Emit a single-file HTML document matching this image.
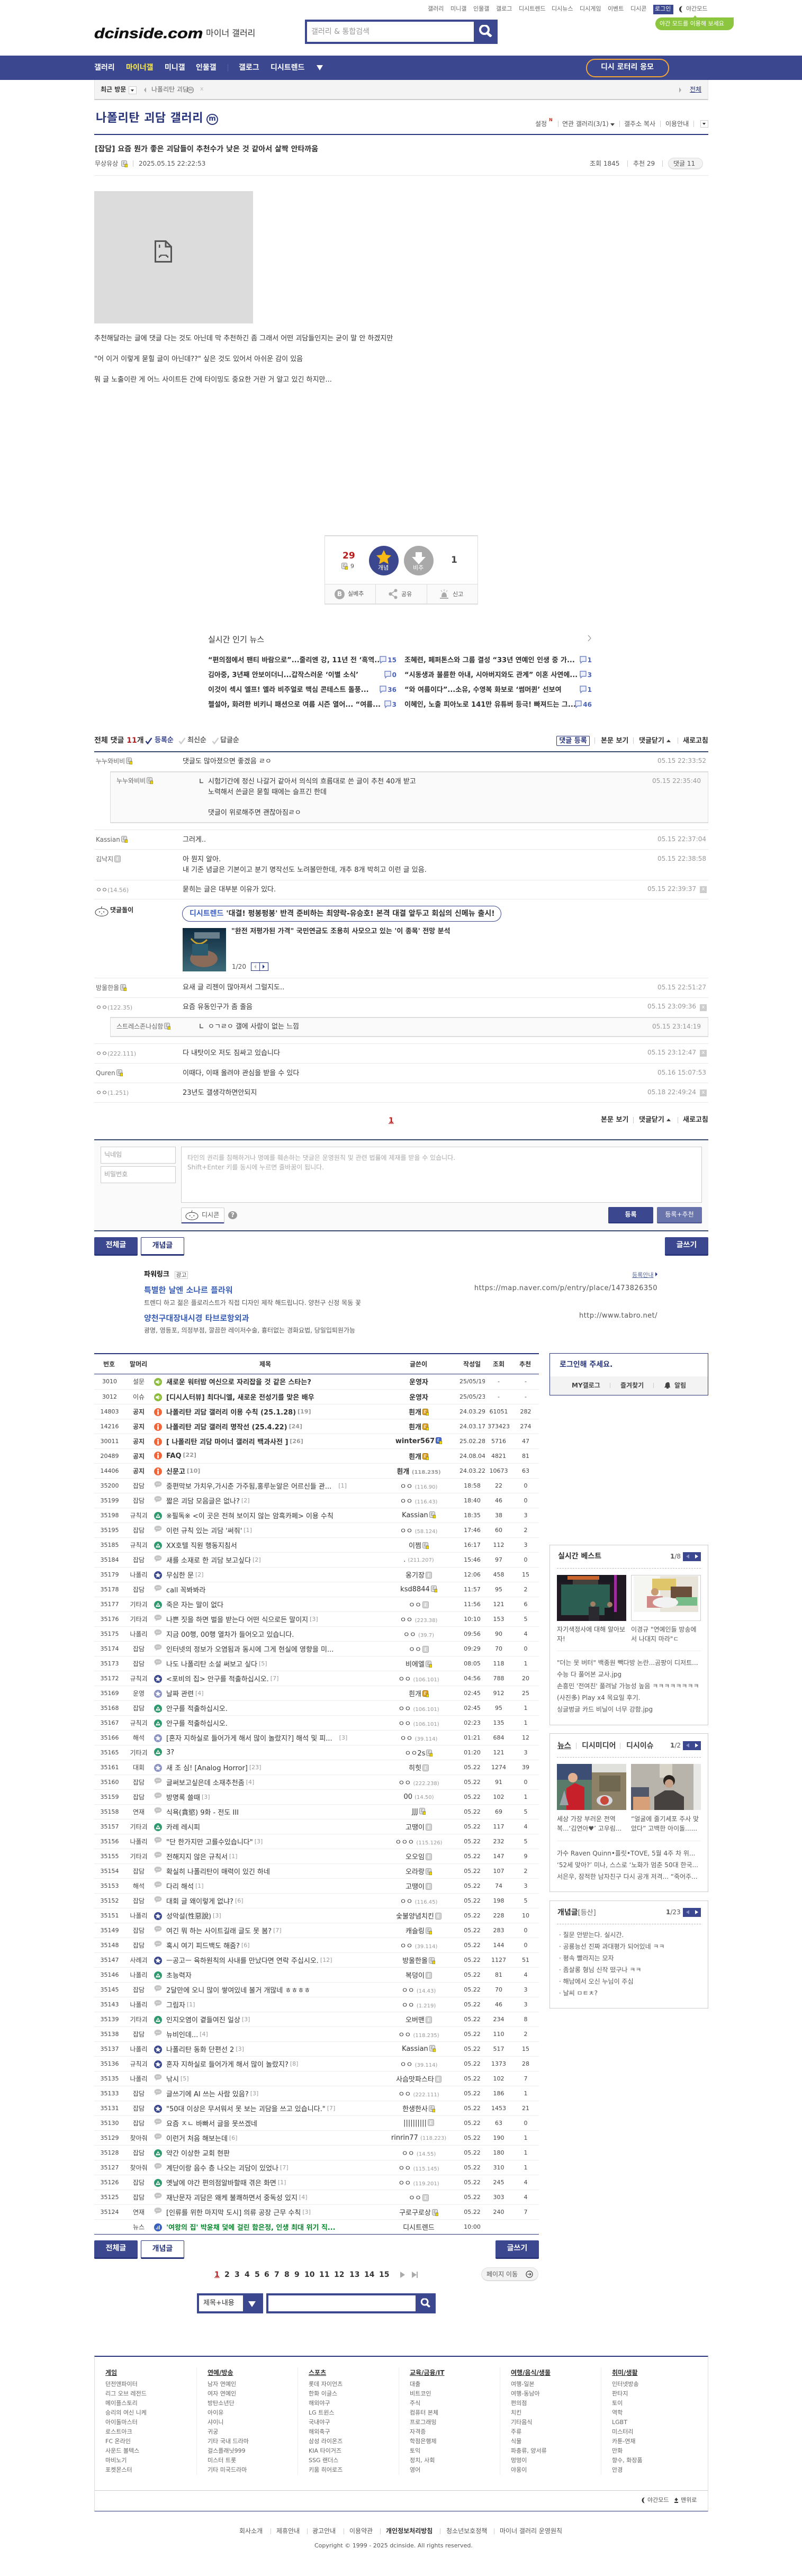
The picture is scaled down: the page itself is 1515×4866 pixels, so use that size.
<!DOCTYPE html>
<html lang="ko"><head><meta charset="utf-8"><title>나폴리탄 괴담 갤러리</title>
<style>
*{box-sizing:border-box}
html,body{margin:0;padding:0;background:#fff}
body{position:relative;width:1515px;height:4866px;overflow:hidden;font-family:"DejaVu Sans","Noto Sans CJK KR",sans-serif;font-size:12px;color:#333}
.a{position:absolute;white-space:nowrap;line-height:20px}
.r{position:absolute}
.b{font-weight:bold}
.f10{font-size:10px}.f11{font-size:11px}.f12{font-size:12px}.f13{font-size:13px}.f14{font-size:14px}.f15{font-size:15px}
.g9{color:#999}.g6{color:#666}.g5{color:#555}
.bl{color:#29367c}
.w{color:#fff}
.l{position:absolute;left:178px;width:1160px;height:1px;background:#e8e8e8}
.sp{position:absolute;width:1px;background:#ccc}
.u{display:inline-block;width:12px;height:13px;vertical-align:-2px;margin-left:2px}
.cc{position:absolute;white-space:nowrap;line-height:20px;font-size:12px;font-weight:bold;color:#4a63b8}
.cc svg{width:15px;height:15px;vertical-align:-3px;margin-right:1px}
table{position:absolute;left:178px;top:2596px;width:840px;border-collapse:collapse;table-layout:fixed;font-size:11px}
td{height:28px;padding:0;border-bottom:1px solid #eee;text-align:center;white-space:nowrap;overflow:hidden;color:#444}
td:nth-child(2){font-size:12px}
td.t{text-align:left;font-size:13px;color:#333;padding-left:3px}
td.t svg{width:15px;height:15px;vertical-align:-3px;margin-right:8px}
td.t svg:has(use[href="#c"]){vertical-align:-1px}
td.t i{font-style:normal;font-size:11px;color:#999;margin-left:3px;position:relative;top:-2px}
td.n{font-size:13px;color:#333}
td.n em{font-style:normal;font-size:10px;color:#999}
.ft{position:absolute;top:4495px;font-size:11px;line-height:18px;color:#666;white-space:nowrap}
.side{position:absolute;left:1038px;width:300px;border:1px solid #ccc;background:#fff}
.dash{position:absolute;left:1052px;width:272px;border-top:1px dashed #bbb}
.arr{position:absolute;left:1290px;width:34px;height:17px;background:#3b4890}
.btn{position:absolute;text-align:center;font-size:14px;font-weight:bold;border-radius:2px}
.nv{background:#3b4890;color:#fff;border-bottom:3px solid #29367c}
</style></head><body>
<svg width="0" height="0" style="position:absolute">
<symbol id="sp" viewBox="0 0 16 16"><circle cx="8" cy="8" r="8" fill="#8dbb3c"/><path d="M3.5 6h2.5l3.5-2.5v9L6 10H3.5z" fill="#fff"/><path d="M11 5.5q1.6 2.5 0 5" stroke="#fff" fill="none"/></symbol>
<symbol id="n" viewBox="0 0 16 16"><circle cx="8" cy="8" r="8" fill="#f0663a"/><rect x="6.5" y="6.5" width="3" height="7" fill="#fff"/><circle cx="8" cy="4" r="1.7" fill="#fff"/></symbol>
<symbol id="c" viewBox="0 0 16 16"><path d="M8 0C3.6 0 .5 2.4.5 5.5c0 2 1.2 3.7 3 4.6L3.5 13l3.3-2.1c.4 0 .8.1 1.2.1 4.4 0 7.5-2.4 7.5-5.5S12.4 0 8 0z" fill="#c4c4c4"/><circle cx="5" cy="5.5" r=".9" fill="#fff"/><circle cx="8" cy="5.5" r=".9" fill="#fff"/><circle cx="11" cy="5.5" r=".9" fill="#fff"/></symbol>
<symbol id="p" viewBox="0 0 16 16"><circle cx="8" cy="8" r="8" fill="#2e9a6e"/><path d="M3 12 8 3.5 13 12z" fill="#fff"/><circle cx="8" cy="8.5" r="1.5" fill="#2e9a6e"/></symbol>
<symbol id="s" viewBox="0 0 16 16"><circle cx="8" cy="8" r="8" fill="#3b4890"/><path d="M8 2.5l1.7 3.6 3.9.5-2.9 2.7.8 3.9L8 10.8l-3.5 1.9.8-3.9-2.9-2.7 3.9-.5z" fill="#fff"/></symbol>
<symbol id="t" viewBox="0 0 16 16"><circle cx="8" cy="8" r="8" fill="#8b93c5"/><path d="M8 2.5l1.7 3.6 3.9.5-2.9 2.7.8 3.9L8 10.8l-3.5 1.9.8-3.9-2.9-2.7 3.9-.5z" fill="#fff"/></symbol>
<symbol id="ns" viewBox="0 0 16 16"><circle cx="8" cy="8" r="8" fill="#3860bb"/><path d="M4 12V9h1.5v3zM7 12V6h1.5v6zM10 12V4h1.5v8z" fill="#fff"/></symbol>
<symbol id="ug" viewBox="0 0 12 13"><rect x=".5" y=".5" width="11" height="12" rx="2" fill="#d5d5d5" stroke="#aaa"/><path d="M7.5 4H5.5L5 8.5h2.2" stroke="#fff" stroke-width="1.3" fill="none"/></symbol>
<symbol id="uy" viewBox="0 0 12 13"><rect x=".5" y=".5" width="10" height="11" rx="2" fill="#e2e2e2" stroke="#999"/><path d="M6.5 3H4.5L4 7.5h2.2" stroke="#999" stroke-width="1.1" fill="none"/><rect x="7" y="7" width="5" height="6" fill="#f2d600" stroke="#555" stroke-width=".7"/></symbol>
<symbol id="uo" viewBox="0 0 12 13"><rect x=".5" y=".5" width="10" height="11" rx="2" fill="#e3a62a" stroke="#a06f10"/><path d="M6.5 3H4.5L4 7.5h2.2" stroke="#fff" stroke-width="1.1" fill="none"/><rect x="7" y="7" width="5" height="6" fill="#f2d600" stroke="#555" stroke-width=".7"/></symbol>
<symbol id="ub" viewBox="0 0 12 13"><rect x=".5" y=".5" width="10" height="11" rx="2" fill="#4a6ed0" stroke="#2a4aa0"/><path d="M6.5 3H4.5L4 7.5h2.2" stroke="#fff" stroke-width="1.1" fill="none"/><rect x="7" y="7" width="5" height="6" fill="#f2d600" stroke="#555" stroke-width=".7"/></symbol>
<symbol id="cm" viewBox="0 0 15 15"><path d="M2 1h11v9.5H6l-3 3v-3H2z" fill="#eef1fb" stroke="#5b72c0" stroke-width="1.2"/></symbol>
<symbol id="dc" viewBox="0 0 26 19"><path d="M13 4C6 4 1 7.500 1 11.500S6 18.500 13 18.500s12-3 12-7-5-7.500-12-7.500zM13 4c-1-1.500-.5-3 1-3.500" fill="#fff" stroke="#333" stroke-width="1"/><circle cx="9" cy="10.500" r="1" fill="#333"/><circle cx="17" cy="10.500" r="1" fill="#333"/><path d="M12 14h2" stroke="#333"/></symbol>
<symbol id="mg" viewBox="0 0 27 23"><circle cx="11" cy="9" r="8" fill="none" stroke="#fff" stroke-width="4"/><path d="M16 15l8 7" stroke="#fff" stroke-width="5"/></symbol>
<symbol id="ck" viewBox="0 0 14 13"><path d="M1.500 7 5 11.500 12.500 1" fill="none" stroke="currentColor" stroke-width="2.400"/></symbol>
<symbol id="rp" viewBox="0 0 7 9"><path d="M1 0V7.500H7" fill="none" stroke="#555" stroke-width="1.600"/></symbol>
</svg>

<!-- top links -->
<div class="a f11 g6" style="left:808px;top:7px">갤러리</div>
<div class="a f11 g6" style="left:851px;top:7px">미니갤</div>
<div class="a f11 g6" style="left:894px;top:7px">인물갤</div>
<div class="a f11 g6" style="left:937px;top:7px">갤로그</div>
<div class="a f11 g6" style="left:980px;top:7px">디시트렌드</div>
<div class="a f11 g6" style="left:1042px;top:7px">디시뉴스</div>
<div class="a f11 g6" style="left:1095px;top:7px">디시게임</div>
<div class="a f11 g6" style="left:1148px;top:7px">이벤트</div>
<div class="a f11 g6" style="left:1191px;top:7px">디시콘</div>
<div class="r" style="left:1234px;top:9px;width:38px;height:18px;background:#3b4890"></div>
<div class="a f11 w" style="left:1237px;top:7px">로그인</div>
<svg class="r" style="left:1282px;top:11px" width="10" height="13"><path d="M7 .500A6 6 0 1 0 7 12.500 8 8 0 0 1 7 .500z" fill="#333"/></svg>
<div class="a f11 g6" style="left:1296px;top:7px">야간모드</div>
<div class="r" style="left:1238px;top:33px;width:148px;height:24px;background:#8cc63f;border-radius:12px 0 12px 12px"></div>
<div class="r" style="left:1309px;top:29px;width:0;height:0;border-left:4px solid transparent;border-right:4px solid transparent;border-bottom:5px solid #8cc63f"></div>
<div class="a f11 w" style="left:1246px;top:35px">야간 모드를 이용해 보세요</div>

<!-- logo / search -->
<div class="a b" style="left:178px;top:48px;font:italic bold 27px/30px 'Liberation Sans',sans-serif;color:#111;transform:scaleX(1.19);transform-origin:left;-webkit-text-stroke:.5px #111">dcinside.com</div>
<div class="a" style="left:389px;top:53px;font-size:16px;color:#333">마이너 갤러리</div>
<div class="r" style="left:576px;top:37px;width:364px;height:46px;background:#3b4890"></div>
<div class="r" style="left:580px;top:41px;width:315px;height:38px;background:#fff"></div>
<div class="a f14 g9" style="left:588px;top:50px">갤러리 &amp; 통합검색</div>
<svg class="r" style="left:904px;top:47px" width="27" height="23"><use href="#mg"/></svg>

<!-- nav -->
<div class="r" style="left:0;top:105px;width:1515px;height:46px;background:#3b4890"></div>
<div class="a f14 b w" style="left:178px;top:118px">갤러리</div>
<div class="a f14 b" style="left:238px;top:118px;color:#ffed44">마이너갤</div>
<div class="a f14 b w" style="left:311px;top:118px">미니갤</div>
<div class="a f14 b w" style="left:370px;top:118px">인물갤</div>
<div class="r" style="left:430px;top:121px;width:1px;height:14px;background:#5a66a8"></div>
<div class="a f14 b w" style="left:451px;top:118px">갤로그</div>
<div class="a f14 b w" style="left:511px;top:118px">디시트렌드</div>
<div class="r" style="left:598px;top:123px;width:0;height:0;border-left:6.500px solid transparent;border-right:6.500px solid transparent;border-top:10px solid #fff"></div>
<div class="r" style="left:1107px;top:111px;width:157px;height:35px;border:2px solid #f5a635;border-radius:17px"></div>
<div class="a f14 b w" style="left:1135px;top:117px">디시 로터리 응모</div>

<!-- breadcrumb -->
<div class="r" style="left:178px;top:151px;width:1160px;height:38px;background:#f4f4f4;border:1px solid #e4e4e4;border-top:0;border-bottom:2px solid #ccc"></div>
<div class="a f12 b" style="left:190px;top:159px">최근 방문</div>
<div class="r" style="left:243px;top:163px;width:15px;height:15px;background:#fff;border:1px solid #ccc"></div>
<div class="r" style="left:247px;top:169px;border-left:3.500px solid transparent;border-right:3.500px solid transparent;border-top:4px solid #333"></div>
<div class="r" style="left:272px;top:165px;border-top:5px solid transparent;border-bottom:5px solid transparent;border-right:4px solid #aaa"></div>
<div class="a f12 g6" style="left:286px;top:159px">나폴리탄 괴담</div>
<div class="r" style="left:354px;top:164px;width:12px;height:12px;border:1px solid #777;border-radius:50%;font-size:8px;line-height:9px;text-align:center;color:#555">m</div>
<div class="a f11" style="left:378px;top:158px;color:#bbb">x</div>
<div class="r" style="left:1283px;top:165px;border-top:5px solid transparent;border-bottom:5px solid transparent;border-left:4px solid #aaa"></div>
<div class="a f12 bl" style="left:1303px;top:159px;text-decoration:underline">전체</div>

<!-- title -->
<div class="a b bl" style="left:181px;top:212px;font-size:22px;line-height:24px;letter-spacing:.5px">나폴리탄 괴담 갤러리</div>
<div class="r" style="left:390px;top:215px;width:22px;height:21px;border:2px solid #29367c;border-radius:50%;color:#29367c;font-size:13px;line-height:16px;text-align:center;font-weight:bold">m</div>
<div class="a f12 g5" style="left:1011px;top:224px">설정</div>
<div class="a b" style="left:1037px;top:222px;font-size:8px;line-height:10px;color:#c0392b">N</div>
<div class="sp" style="left:1054px;top:228px;height:12px"></div>
<div class="a f12 g5" style="left:1062px;top:224px">연관 갤러리(3/1)</div>
<div class="r" style="left:1153px;top:233px;border-left:4px solid transparent;border-right:4px solid transparent;border-top:5px solid #444"></div>
<div class="sp" style="left:1170px;top:228px;height:12px"></div>
<div class="a f12 g5" style="left:1179px;top:224px">갤주소 복사</div>
<div class="sp" style="left:1247px;top:228px;height:12px"></div>
<div class="a f12 g5" style="left:1257px;top:224px">이용안내</div>
<div class="sp" style="left:1310px;top:228px;height:12px"></div>
<div class="r" style="left:1323px;top:227px;width:15px;height:14px;background:#fff;border:1px solid #ccc"></div>
<div class="r" style="left:1327px;top:232px;border-left:3.500px solid transparent;border-right:3.500px solid transparent;border-top:4px solid #333"></div>
<div class="r" style="left:178px;top:253px;width:1160px;height:2px;background:#29367c"></div>

<!-- post head -->
<div class="a f14 b" style="left:179px;top:272px">[잡담] 요즘 뭔가 좋은 괴담들이 추천수가 낮은 것 같아서 살짝 안타까움</div>
<div class="a f12 g5" style="left:179px;top:299px">무상유상</div>
<svg class="r" style="left:229px;top:303px" width="12" height="13"><use href="#uy"/></svg>
<div class="sp" style="left:251px;top:303px;height:12px"></div>
<div class="a f12 g5" style="left:262px;top:299px">2025.05.15 22:22:53</div>
<div class="a f12 g5" style="left:1114px;top:299px">조회 1845</div>
<div class="sp" style="left:1185px;top:303px;height:12px"></div>
<div class="a f12 g5" style="left:1196px;top:299px">추천 29</div>
<div class="sp" style="left:1251px;top:303px;height:12px"></div>
<div class="r" style="left:1262px;top:298px;width:66px;height:22px;background:#f3f3f3;border:1px solid #ddd;border-bottom:2px solid #ddd;border-radius:11px"></div>
<div class="a f12 g5" style="left:1272px;top:299px">댓글 11</div>
<div class="r" style="left:178px;top:331px;width:1160px;height:1px;background:#e8e8e8"></div>

<!-- image placeholder -->
<div class="r" style="left:178px;top:361px;width:300px;height:250px;background:#dcdcdc"></div>
<svg class="r" style="left:292px;top:454px" width="33" height="42"><path d="M1.500 1.500H21L31.500 12V40.500H1.500Z" fill="none" stroke="#555" stroke-width="3"/><path d="M21 1.500V12H31.500" fill="none" stroke="#555" stroke-width="3"/><rect x="8" y="8" width="2.500" height="6" fill="#555"/><path d="M9 33v-3h2.500v-2h11v2h2.500v3" fill="none" stroke="#555" stroke-width="2"/></svg>
<div class="a f13" style="left:178px;top:630px">추천해달라는 글에 댓글 다는 것도 아닌데 막 추천하긴 좀 그래서 어떤 괴담들인지는 굳이 말 안 하겠지만</div>
<div class="a f13" style="left:178px;top:669px">"어 이거 이렇게 묻힐 글이 아닌데??" 싶은 것도 있어서 아쉬운 감이 있음</div>
<div class="a f13" style="left:178px;top:708px">뭐 글 노출이란 게 어느 사이트든 간에 타이밍도 중요한 거란 거 알고 있긴 하지만...</div>

<!-- vote -->
<div class="r" style="left:613px;top:1011px;width:290px;height:131px;background:#fff;border:1px solid #ddd;border-top:2px solid #ddd;border-bottom:2px solid #ddd"></div>
<div class="r" style="left:614px;top:1103px;width:288px;height:37px;background:#fafafa;border-top:1px solid #ddd"></div>
<div class="sp" style="left:709px;top:1103px;height:37px;background:#ddd"></div>
<div class="sp" style="left:806px;top:1103px;height:37px;background:#ddd"></div>
<div class="a b" style="left:647px;top:1040px;font-size:17px;color:#b71c1c">29</div>
<svg class="r" style="left:645px;top:1063px" width="12" height="13"><use href="#uy"/></svg>
<div class="a f11 g5" style="left:662px;top:1060px">9</div>
<div class="r" style="left:697px;top:1031px;width:56px;height:56px;border-radius:50%;background:#3b4890"></div>
<svg class="r" style="left:710px;top:1039px" width="30" height="27"><path d="M15 0l4.300 9 9.700 1.200-7 6.500 1.800 9.800L15 21.800 6.200 26.500 8 16.700 1 10.200 10.700 9z" fill="#f8b914"/></svg>
<div class="a f11 w" style="left:714px;top:1063px">개념</div>
<div class="r" style="left:763px;top:1031px;width:56px;height:56px;border-radius:50%;background:#a9a9a9"></div>
<svg class="r" style="left:777px;top:1043px" width="28" height="23"><path d="M8 0H20V9H27L14 23 1 9H8z" fill="#fff"/></svg>
<div class="a f11 w" style="left:780px;top:1063px">비추</div>
<div class="a b" style="left:852px;top:1048px;font-size:17px;color:#444">1</div>
<div class="r" style="left:632px;top:1113px;width:19px;height:19px;background:#a9a9a9;border-radius:50%;color:#fff;font:bold 12px/19px 'DejaVu Sans',sans-serif;text-align:center">B</div>
<div class="a f11 g5" style="left:657px;top:1112px">실베추</div>
<svg class="r" style="left:734px;top:1112px" width="17" height="20"><circle cx="13.500" cy="3.500" r="3" fill="#aaa"/><circle cx="3.500" cy="10" r="3.200" fill="#aaa"/><circle cx="13.500" cy="16.500" r="3" fill="#aaa"/><path d="M13.500 3.500 3.500 10l10 6.500" stroke="#aaa" stroke-width="1.600" fill="none"/></svg>
<div class="a f11 g5" style="left:758px;top:1113px">공유</div>
<svg class="r" style="left:830px;top:1112px" width="18" height="20"><path d="M4 16q0-9 5-9t5 9z" fill="#aaa"/><rect x="1" y="17" width="16" height="2" fill="#aaa"/><path d="M9 1v4M3 3l2 3M15 3l-2 3" stroke="#aaa"/></svg>
<div class="a f11 g5" style="left:855px;top:1113px">신고</div>

<!-- news -->
<div class="a f15" style="left:393px;top:1198px">실시간 인기 뉴스</div>
<svg class="r" style="left:1110px;top:1199px" width="8" height="13"><path d="M1 1l5 5.500L1 12" stroke="#888" fill="none"/></svg>
<div class="a f13 b" style="left:393px;top:1238px">“편의점에서 팬티 바람으로”...줄리엔 강, 11년 전 ‘흑역...</div>
<div class="a f13 b" style="left:393px;top:1266px">김아중, 3년째 안보이더니...갑작스러운 ‘이별 소식’</div>
<div class="a f13 b" style="left:393px;top:1294px">이것이 섹시 엘프! 엘라 비주얼로 맥심 콘테스트 돌풍...</div>
<div class="a f13 b" style="left:393px;top:1322px">첼설아, 화려한 비키니 패션으로 여름 시즌 열어... “여름...</div>
<div class="a f13 b" style="left:764px;top:1238px">조혜련, 페퍼톤스와 그룹 결성 “33년 연예인 인생 중 가...</div>
<div class="a f13 b" style="left:764px;top:1266px">“시동생과 불륜한 아내, 시아버지와도 관계” 이혼 사연에...</div>
<div class="a f13 b" style="left:764px;top:1294px">“와 여름이다”...소유, 수영복 화보로 ‘썸머퀸’ 선보여</div>
<div class="a f13 b" style="left:764px;top:1322px">이혜인, 노출 피아노로 141만 유튜버 등극! 빠져드는 그...</div>
<div class="cc" style="right:766px;top:1237px"><svg><use href="#cm"/></svg>15</div>
<div class="cc" style="right:766px;top:1265px"><svg><use href="#cm"/></svg>0</div>
<div class="cc" style="right:766px;top:1293px"><svg><use href="#cm"/></svg>36</div>
<div class="cc" style="right:766px;top:1321px"><svg><use href="#cm"/></svg>3</div>
<div class="cc" style="right:397px;top:1237px"><svg><use href="#cm"/></svg>1</div>
<div class="cc" style="right:397px;top:1265px"><svg><use href="#cm"/></svg>3</div>
<div class="cc" style="right:397px;top:1293px"><svg><use href="#cm"/></svg>1</div>
<div class="cc" style="right:397px;top:1321px"><svg><use href="#cm"/></svg>46</div>

<!-- comment head -->
<div class="a f14 b" style="left:178px;top:1389px">전체 댓글 <span style="color:#b71c1c">11</span>개</div>
<svg class="r" style="left:274px;top:1393px;color:#29367c" width="14" height="13"><use href="#ck"/></svg>
<div class="a f13 b" style="left:292px;top:1389px;color:#3b4890">등록순</div>
<svg class="r" style="left:337px;top:1393px;color:#ccc" width="14" height="13"><use href="#ck"/></svg>
<div class="a f13 b" style="left:354px;top:1389px;color:#666">최신순</div>
<svg class="r" style="left:400px;top:1393px;color:#ccc" width="14" height="13"><use href="#ck"/></svg>
<div class="a f13 b" style="left:416px;top:1389px;color:#666">답글순</div>
<div class="r f13 b bl" style="left:1051px;top:1390px;width:63px;height:19px;border:1px solid #29367c;border-radius:2px;text-align:center;line-height:17px">댓글 등록</div>
<div class="a f13 b" style="left:1135px;top:1390px">본문 보기</div>
<div class="sp" style="left:1123px;top:1393px;height:12px"></div>
<div class="sp" style="left:1196px;top:1393px;height:12px"></div>
<div class="a f13 b" style="left:1207px;top:1390px">댓글닫기</div>
<div class="r" style="left:1259px;top:1397px;border-left:4px solid transparent;border-right:4px solid transparent;border-bottom:5px solid #444"></div>
<div class="sp" style="left:1280px;top:1393px;height:12px"></div>
<div class="a f13 b" style="left:1290px;top:1390px">새로고침</div>
<div class="r" style="left:178px;top:1419px;width:1160px;height:2px;background:#3a4a6c"></div>

<!-- comments -->
<div class="a f12 g6" style="left:181px;top:1428px">누누와비비<svg class="u"><use href="#uy"/></svg></div>
<div class="a f13" style="left:345px;top:1429px">댓글도 많아졌으면 좋겠음 ㄹㅇ</div>
<div class="a f12 g9" style="right:181px;top:1427px">05.15 22:33:52</div>

<div class="r" style="left:208px;top:1457px;width:1130px;height:98px;background:#fafafa;border:1px solid #ddd;border-width:2px 1px 2px 1px"></div>
<div class="a f12 g6" style="left:220px;top:1465px">누누와비비<svg class="u"><use href="#uy"/></svg></div>
<svg class="r" style="left:377px;top:1471px" width="7" height="9"><use href="#rp"/></svg>
<div class="a f13" style="left:393px;top:1467px">시험기간에 정신 나갈거 같아서 의식의 흐름대로 쓴 글이 추천 40개 받고</div>
<div class="a f13" style="left:393px;top:1487px">노력해서 쓴글은 묻힐 때에는 슬프긴 한데</div>
<div class="a f13" style="left:393px;top:1526px">댓글이 위로해주면 괜찮아짐ㄹㅇ</div>
<div class="a f12 g9" style="right:191px;top:1465px">05.15 22:35:40</div>
<div class="l" style="top:1567px"></div>

<div class="a f12 g6" style="left:181px;top:1576px">Kassian<svg class="u"><use href="#uy"/></svg></div>
<div class="a f13" style="left:345px;top:1577px">그러게..</div>
<div class="a f12 g9" style="right:181px;top:1575px">05.15 22:37:04</div>
<div class="l" style="top:1604px"></div>

<div class="a f12 g6" style="left:181px;top:1613px">김낙지<svg class="u"><use href="#ug"/></svg></div>
<div class="a f13" style="left:345px;top:1614px">아 뭔지 알아.</div>
<div class="a f13" style="left:345px;top:1634px">내 기준 념글은 기본이고 분기 명작선도 노려볼만한데, 개추 8개 박히고 이런 글 있음.</div>
<div class="a f12 g9" style="right:181px;top:1612px">05.15 22:38:58</div>
<div class="l" style="top:1662px"></div>

<div class="a f12 g6" style="left:181px;top:1671px">ㅇㅇ<span class="f11 g9">(14.56)</span></div>
<div class="a f13" style="left:345px;top:1671px">묻히는 글은 대부분 이유가 있다.</div>
<div class="a f12 g9" style="right:200px;top:1669px">05.15 22:39:37</div>
<div class="r" style="left:1322px;top:1674px;width:13px;height:13px;background:#ccc;color:#fff;font-size:10px;line-height:12px;text-align:center">x</div>
<div class="l" style="top:1698px"></div>

<svg class="r" style="left:179px;top:1712px" width="26" height="19"><use href="#dc"/></svg>
<div class="a f12 b" style="left:208px;top:1709px">댓글돌이</div>
<div class="r" style="left:344px;top:1711px;width:603px;height:30px;border:1px solid #3b4890;border-radius:15px"></div>
<div class="a f14 b" style="left:358px;top:1716px"><span style="color:#3b5fc0">디시트렌드</span> '대결! 펑봉펑봉' 반격 준비하는 최양락-유승호! 본격 대결 앞두고 회심의 신메뉴 출시!</div>
<svg class="r" style="left:345px;top:1753px" width="82" height="82"><defs><linearGradient id="np" x1="0" y1="0" x2="0" y2="1"><stop offset="0" stop-color="#0e2a3e"/><stop offset="1" stop-color="#3d6a78"/></linearGradient></defs><rect width="82" height="82" fill="url(#np)"/><ellipse cx="40" cy="58" rx="26" ry="16" fill="#8a6a58"/><path d="M16 20q14 18 30 2" stroke="#c8a030" stroke-width="3" fill="none"/><rect x="22" y="8" width="48" height="12" fill="#6a7f8c"/><rect x="18" y="30" width="30" height="22" fill="#2b5a6e"/></svg>
<div class="a f13 b" style="left:437px;top:1750px">"완전 저평가된 가격" 국민연금도 조용히 사모으고 있는 '이 종목' 전망 분석</div>
<div class="a f12 g5" style="left:438px;top:1816px">1/20</div>
<div class="r" style="left:474px;top:1818px;width:33px;height:16px;border:1px solid #29367c"></div>
<div class="r" style="left:490px;top:1818px;width:1px;height:16px;background:#29367c"></div>
<div class="r" style="left:480px;top:1822px;border-top:4px solid transparent;border-bottom:4px solid transparent;border-right:4px solid #bbb"></div>
<div class="r" style="left:496px;top:1822px;border-top:4px solid transparent;border-bottom:4px solid transparent;border-left:4px solid #29367c"></div>
<div class="l" style="top:1847px"></div>

<div class="a f12 g6" style="left:181px;top:1856px">방울한올<svg class="u"><use href="#uy"/></svg></div>
<div class="a f13" style="left:345px;top:1856px">요새 글 리젠이 많아져서 그럴지도..</div>
<div class="a f12 g9" style="right:181px;top:1855px">05.15 22:51:27</div>
<div class="l" style="top:1884px"></div>

<div class="a f12 g6" style="left:181px;top:1893px">ㅇㅇ<span class="f11 g9">(122.35)</span></div>
<div class="a f13" style="left:345px;top:1893px">요즘 유동인구가 좀 줄음</div>
<div class="a f12 g9" style="right:200px;top:1891px">05.15 23:09:36</div>
<div class="r" style="left:1322px;top:1897px;width:13px;height:13px;background:#ccc;color:#fff;font-size:10px;line-height:12px;text-align:center">x</div>
<div class="r" style="left:208px;top:1921px;width:1130px;height:38px;background:#fafafa;border:1px solid #ddd;border-width:2px 1px 2px 1px"></div>
<div class="a f12 g6" style="left:220px;top:1929px">스트레스존나심함<svg class="u"><use href="#uy"/></svg></div>
<svg class="r" style="left:377px;top:1934px" width="7" height="9"><use href="#rp"/></svg>
<div class="a f13" style="left:393px;top:1930px">ㅇㄱㄹㅇ 갤에 사람이 없는 느낌</div>
<div class="a f12 g9" style="right:191px;top:1929px">05.15 23:14:19</div>
<div class="l" style="top:1971px"></div>

<div class="a f12 g6" style="left:181px;top:1980px">ㅇㅇ<span class="f11 g9">(222.111)</span></div>
<div class="a f13" style="left:345px;top:1980px">다 내탓이오 저도 짐싸고 있습니다</div>
<div class="a f12 g9" style="right:200px;top:1978px">05.15 23:12:47</div>
<div class="r" style="left:1322px;top:1983px;width:13px;height:13px;background:#ccc;color:#fff;font-size:10px;line-height:12px;text-align:center">x</div>
<div class="l" style="top:2008px"></div>

<div class="a f12 g6" style="left:181px;top:2017px">Quren<svg class="u"><use href="#uy"/></svg></div>
<div class="a f13" style="left:345px;top:2018px">이때다, 이때 올려야 관심을 받을 수 있다</div>
<div class="a f12 g9" style="right:181px;top:2016px">05.16 15:07:53</div>
<div class="l" style="top:2045px"></div>

<div class="a f12 g6" style="left:181px;top:2054px">ㅇㅇ<span class="f11 g9">(1.251)</span></div>
<div class="a f13" style="left:345px;top:2055px">23년도 갤생각하면안되지</div>
<div class="a f12 g9" style="right:200px;top:2053px">05.18 22:49:24</div>
<div class="r" style="left:1322px;top:2058px;width:13px;height:13px;background:#ccc;color:#fff;font-size:10px;line-height:12px;text-align:center">x</div>
<div class="l" style="top:2082px"></div>

<div class="a f14 b" style="left:734px;top:2107px;color:#b71c1c;text-decoration:underline">1</div>
<div class="a f13 b" style="left:1135px;top:2106px">본문 보기</div>
<div class="sp" style="left:1196px;top:2110px;height:12px"></div>
<div class="a f13 b" style="left:1207px;top:2106px">댓글닫기</div>
<div class="r" style="left:1259px;top:2113px;border-left:4px solid transparent;border-right:4px solid transparent;border-bottom:5px solid #444"></div>
<div class="sp" style="left:1280px;top:2110px;height:12px"></div>
<div class="a f13 b" style="left:1290px;top:2106px">새로고침</div>

<!-- write -->
<div class="r" style="left:178px;top:2152px;width:1160px;height:174px;background:#fafafa;border-top:2px solid #3a4a6c;border-bottom:2px solid #3a4a6c"></div>
<div class="r" style="left:190px;top:2166px;width:142px;height:32px;background:#fff;border:1px solid #ccc"></div>
<div class="a f12 g9" style="left:197px;top:2171px">닉네임</div>
<div class="r" style="left:190px;top:2203px;width:142px;height:32px;background:#fff;border:1px solid #ccc"></div>
<div class="a f12 g9" style="left:197px;top:2208px">비밀번호</div>
<div class="r" style="left:342px;top:2166px;width:984px;height:106px;background:#fff;border:1px solid #ccc"></div>
<div class="a f12" style="left:354px;top:2177px;color:#aaa">타인의 권리를 침해하거나 명예를 훼손하는 댓글은 운영원칙 및 관련 법률에 제재를 받을 수 있습니다.</div>
<div class="a f12" style="left:354px;top:2195px;color:#aaa">Shift+Enter 키를 동시에 누르면 줄바꿈이 됩니다.</div>
<div class="r" style="left:342px;top:2281px;width:82px;height:30px;background:#fff;border:1px solid #ccc;border-bottom:2px solid #29367c;border-radius:2px"></div>
<svg class="r" style="left:350px;top:2286px" width="25" height="19"><use href="#dc"/></svg>
<div class="a f12 g5" style="left:381px;top:2285px">디시콘</div>
<div class="r" style="left:431px;top:2288px;width:17px;height:15px;border-radius:50%;background:#999;color:#fff;font-size:12px;font-weight:bold;line-height:15px;text-align:center">?</div>
<div class="r w f12 b" style="left:1149px;top:2280px;width:85px;height:31px;background:#3b4890;border-bottom:2px solid #29367c;border-radius:2px;text-align:center;line-height:28px">등록</div>
<div class="r w f12" style="left:1241px;top:2280px;width:85px;height:31px;background:#6a74ac;border-bottom:2px solid #4a5590;border-radius:2px;text-align:center;line-height:28px">등록+추천</div>

<div class="btn nv" style="left:178px;top:2337px;width:82px;height:35px;line-height:30px">전체글</div>
<div class="btn" style="left:266px;top:2337px;width:82px;height:35px;line-height:30px;background:#fff;color:#29367c;border:1px solid #29367c;border-bottom:3px solid #29367c">개념글</div>
<div class="btn nv" style="left:1256px;top:2337px;width:82px;height:35px;line-height:30px">글쓰기</div>

<!-- power link -->
<div class="a f13 b" style="left:272px;top:2398px;color:#111">파워링크</div>
<div class="r" style="left:330px;top:2401px;width:25px;height:15px;border:1px solid #ccc;font-size:11px;line-height:13px;text-align:center;color:#555">광고</div>
<div class="a f11" style="left:1194px;top:2399px;color:#5a6a9a;text-decoration:underline">등록안내</div>
<div class="r" style="left:1238px;top:2403px;border-top:4px solid transparent;border-bottom:4px solid transparent;border-left:4px solid #29367c"></div>
<div class="a f15 b" style="left:272px;top:2427px;color:#3b60b8">특별한 날엔 소나르 플라워</div>
<div class="a f13 g5" style="right:273px;top:2424px;letter-spacing:.45px">https://map.naver.com/p/entry/place/1473826350</div>
<div class="a f12 g5" style="left:272px;top:2451px">트렌디 하고 젊은 플로리스트가 직접 디자인 제작 해드립니다. 양천구 신정 목동 꽃</div>
<div class="a f15 b" style="left:272px;top:2480px;color:#3b60b8">양천구대장내시경 타브로항외과</div>
<div class="a f13 g5" style="right:273px;top:2476px;letter-spacing:.45px">http://www.tabro.net/</div>
<div class="a f12 g5" style="left:272px;top:2503px">광명, 영등포, 의정부점, 깔끔한 레이저수술, 흉터없는 경화요법, 당일입퇴원가능</div>

<!-- list head -->
<div class="r" style="left:178px;top:2556px;width:840px;height:2px;background:#29367c"></div>
<div class="r" style="left:178px;top:2595px;width:840px;height:1px;background:#29367c"></div>
<div class="a f12 b" style="left:195px;top:2567px">번호</div>
<div class="a f12 b" style="left:245px;top:2567px">말머리</div>
<div class="a f12 b" style="left:490px;top:2567px">제목</div>
<div class="a f12 b" style="left:774px;top:2567px">글쓴이</div>
<div class="a f12 b" style="left:875px;top:2567px">작성일</div>
<div class="a f12 b" style="left:931px;top:2567px">조회</div>
<div class="a f12 b" style="left:981px;top:2567px">추천</div>

<table><colgroup><col style="width:58px"><col style="width:52px"><col style="width:426px"><col style="width:154px"><col style="width:48px"><col style="width:52px"><col style="width:50px"></colgroup>
<tr><td>3010<td>설문<td class="t b"><svg><use href="#sp"/></svg>새로운 워터밤 여신으로 자리잡을 것 같은 스타는?<td class="n b">운영자<td>25/05/19<td>-<td>-
<tr><td>3012<td>이슈<td class="t b"><svg><use href="#sp"/></svg>[디시人터뷰] 최다니엘, 새로운 전성기를 맞은 배우<td class="n b">운영자<td>25/05/23<td>-<td>-
<tr><td>14803<td class="b">공지<td class="t b"><svg><use href="#n"/></svg>나폴리탄 괴담 갤러리 이용 수칙 (25.1.28)<i>[19]</i><td class="n b">흰개<svg class="u"><use href="#uo"/></svg><td>24.03.29<td>61051<td>282
<tr><td>14216<td class="b">공지<td class="t b"><svg><use href="#n"/></svg>나폴리탄 괴담 갤러리 명작선 (25.4.22)<i>[24]</i><td class="n b">흰개<svg class="u"><use href="#uo"/></svg><td>24.03.17<td>373423<td>274
<tr><td>30011<td class="b">공지<td class="t b"><svg><use href="#n"/></svg>[ 나폴리탄 괴담 마이너 갤러리 백과사전 ]<i>[26]</i><td class="n b">winter567<svg class="u"><use href="#ub"/></svg><td>25.02.28<td>5716<td>47
<tr><td>20489<td class="b">공지<td class="t b"><svg><use href="#n"/></svg>FAQ<i>[22]</i><td class="n b">흰개<svg class="u"><use href="#uo"/></svg><td>24.08.04<td>4821<td>81
<tr><td>14406<td class="b">공지<td class="t b"><svg><use href="#n"/></svg>신문고<i>[10]</i><td class="n b">흰개 <em class="b">(118.235)</em><td>24.03.22<td>10673<td>63
<tr><td>35200<td>잡담<td class="t"><svg><use href="#c"/></svg>중편막보 가치우,가시춘 가주됨,홍루눈알은 어르신들 관...<i style="margin-left:13px">[1]</i><td class="n">ㅇㅇ <em>(116.90)</em><td>18:58<td>22<td>0
<tr><td>35199<td>잡담<td class="t"><svg><use href="#c"/></svg>짧은 괴담 모음글은 없나?<i>[2]</i><td class="n">ㅇㅇ <em>(116.43)</em><td>18:40<td>46<td>0
<tr><td>35198<td>규칙괴<td class="t"><svg><use href="#p"/></svg>※필독※ &lt;이 곳은 전혀 보이지 않는 암흑카페&gt; 이용 수칙<td class="n">Kassian<svg class="u"><use href="#uy"/></svg><td>18:35<td>38<td>3
<tr><td>35195<td>잡담<td class="t"><svg><use href="#c"/></svg>이런 규칙 있는 괴담 '써줘'<i>[1]</i><td class="n">ㅇㅇ <em>(58.124)</em><td>17:46<td>60<td>2
<tr><td>35185<td>규칙괴<td class="t"><svg><use href="#p"/></svg>XX호텔 직원 행동지침서<td class="n">이쩜<svg class="u"><use href="#uy"/></svg><td>16:17<td>112<td>3
<tr><td>35184<td>잡담<td class="t"><svg><use href="#c"/></svg>새를 소재로 한 괴담 보고싶다<i>[2]</i><td class="n">. <em>(211.207)</em><td>15:46<td>97<td>0
<tr><td>35179<td>나폴리<td class="t"><svg><use href="#s"/></svg>무심한 문<i>[2]</i><td class="n">옹기장<svg class="u"><use href="#ug"/></svg><td>12:06<td>458<td>15
<tr><td>35178<td>잡담<td class="t"><svg><use href="#c"/></svg>call 꼭봐봐라<td class="n">ksd8844<svg class="u"><use href="#uy"/></svg><td>11:57<td>95<td>2
<tr><td>35177<td>기타괴<td class="t"><svg><use href="#p"/></svg>죽은 자는 말이 없다<td class="n">ㅇㅇ<svg class="u"><use href="#ug"/></svg><td>11:56<td>121<td>6
<tr><td>35176<td>기타괴<td class="t"><svg><use href="#c"/></svg>나쁜 짓을 하면 벌을 받는다 어떤 식으로든 말이지<i>[3]</i><td class="n">ㅇㅇ <em>(223.38)</em><td>10:10<td>153<td>5
<tr><td>35175<td>나폴리<td class="t"><svg><use href="#c"/></svg>지금 00행, 00행 열차가 들어오고 있습니다.<td class="n">ㅇㅇ <em>(39.7)</em><td>09:56<td>90<td>4
<tr><td>35174<td>잡담<td class="t"><svg><use href="#c"/></svg>인터넷의 정보가 오염됨과 동시에 그게 현실에 영향을 미...<td class="n">ㅇㅇ<svg class="u"><use href="#ug"/></svg><td>09:29<td>70<td>0
<tr><td>35173<td>잡담<td class="t"><svg><use href="#c"/></svg>나도 나폴리탄 소설 써보고 싶다<i>[5]</i><td class="n">비에엘<svg class="u"><use href="#uy"/></svg><td>08:05<td>118<td>1
<tr><td>35172<td>규칙괴<td class="t"><svg><use href="#s"/></svg>&lt;포비의 집&gt; 안구를 적출하십시오.<i>[7]</i><td class="n">ㅇㅇ <em>(106.101)</em><td>04:56<td>788<td>20
<tr><td>35169<td>운영<td class="t"><svg><use href="#t"/></svg>날짜 관련<i>[4]</i><td class="n">흰개<svg class="u"><use href="#uo"/></svg><td>02:45<td>912<td>25
<tr><td>35168<td>잡담<td class="t"><svg><use href="#p"/></svg>안구를 적출하십시오.<td class="n">ㅇㅇ <em>(106.101)</em><td>02:45<td>95<td>1
<tr><td>35167<td>규칙괴<td class="t"><svg><use href="#p"/></svg>안구를 적출하십시오.<td class="n">ㅇㅇ <em>(106.101)</em><td>02:23<td>135<td>1
<tr><td>35166<td>해석<td class="t"><svg><use href="#t"/></svg>[혼자 지하실로 들어가게 해서 많이 놀랐지?] 해석 및 피...<i style="margin-left:13px">[3]</i><td class="n">ㅇㅇ <em>(39.114)</em><td>01:21<td>684<td>12
<tr><td>35165<td>기타괴<td class="t"><svg><use href="#p"/></svg>3?<td class="n">ㅇㅇ2s<svg class="u"><use href="#uy"/></svg><td>01:20<td>121<td>3
<tr><td>35161<td>대회<td class="t"><svg><use href="#t"/></svg>새 조 심! [Analog Horror]<i>[23]</i><td class="n">히힛<svg class="u"><use href="#ug"/></svg><td>05.22<td>1274<td>39
<tr><td>35160<td>잡담<td class="t"><svg><use href="#c"/></svg>글써보고싶은데 소재추천좀<i>[4]</i><td class="n">ㅇㅇ <em>(222.238)</em><td>05.22<td>91<td>0
<tr><td>35159<td>잡담<td class="t"><svg><use href="#c"/></svg>방명록 쓸때<i>[3]</i><td class="n">00 <em>(14.50)</em><td>05.22<td>102<td>1
<tr><td>35158<td>연재<td class="t"><svg><use href="#c"/></svg>식욕(貪慾) 9화 - 전도 III<td class="n">JJJ<svg class="u"><use href="#uy"/></svg><td>05.22<td>69<td>5
<tr><td>35157<td>기타괴<td class="t"><svg><use href="#p"/></svg>카레 레시피<td class="n">고땡이<svg class="u"><use href="#ug"/></svg><td>05.22<td>117<td>4
<tr><td>35156<td>나폴리<td class="t"><svg><use href="#c"/></svg>"단 한가지만 고를수있습니다"<i>[3]</i><td class="n">ㅇㅇㅇ <em>(115.126)</em><td>05.22<td>232<td>5
<tr><td>35155<td>기타괴<td class="t"><svg><use href="#c"/></svg>전해지지 않은 규칙서<i>[1]</i><td class="n">오오임<svg class="u"><use href="#ug"/></svg><td>05.22<td>147<td>9
<tr><td>35154<td>잡담<td class="t"><svg><use href="#c"/></svg>확실히 나폴리탄이 매력이 있긴 하네<td class="n">오라랑<svg class="u"><use href="#uy"/></svg><td>05.22<td>107<td>2
<tr><td>35153<td>해석<td class="t"><svg><use href="#c"/></svg>다리 해석<i>[1]</i><td class="n">고땡이<svg class="u"><use href="#ug"/></svg><td>05.22<td>74<td>3
<tr><td>35152<td>잡담<td class="t"><svg><use href="#c"/></svg>대회 글 왜이렇게 없냐?<i>[6]</i><td class="n">ㅇㅇ <em>(116.45)</em><td>05.22<td>198<td>5
<tr><td>35151<td>나폴리<td class="t"><svg><use href="#s"/></svg>성악설(性惡說)<i>[3]</i><td class="n">숯불양념치킨<svg class="u"><use href="#ug"/></svg><td>05.22<td>228<td>10
<tr><td>35149<td>잡담<td class="t"><svg><use href="#c"/></svg>여긴 뭐 하는 사이트길래 글도 못 봄?<i>[7]</i><td class="n">캐슬링<svg class="u"><use href="#uy"/></svg><td>05.22<td>283<td>0
<tr><td>35148<td>잡담<td class="t"><svg><use href="#c"/></svg>혹시 여기 피드백도 해줌?<i>[6]</i><td class="n">ㅇㅇ <em>(39.114)</em><td>05.22<td>144<td>0
<tr><td>35147<td>사례괴<td class="t"><svg><use href="#s"/></svg>ㅡ공고ㅡ 육하원칙의 사내를 만났다면 연락 주십시오.<i>[12]</i><td class="n">방울한올<svg class="u"><use href="#uy"/></svg><td>05.22<td>1127<td>51
<tr><td>35146<td>나폴리<td class="t"><svg><use href="#p"/></svg>초능력자<td class="n">복덩이<svg class="u"><use href="#ug"/></svg><td>05.22<td>81<td>4
<tr><td>35145<td>잡담<td class="t"><svg><use href="#c"/></svg>2달만에 오니 많이 쌓여있네 볼거 개많네 ㅎㅎㅎㅎ<td class="n">ㅇㅇ <em>(14.43)</em><td>05.22<td>70<td>3
<tr><td>35143<td>나폴리<td class="t"><svg><use href="#c"/></svg>그림자<i>[1]</i><td class="n">ㅇㅇ <em>(1.219)</em><td>05.22<td>46<td>3
<tr><td>35139<td>기타괴<td class="t"><svg><use href="#p"/></svg>인지오염이 곁들여진 일상<i>[3]</i><td class="n">오버맨<svg class="u"><use href="#ug"/></svg><td>05.22<td>234<td>8
<tr><td>35138<td>잡담<td class="t"><svg><use href="#c"/></svg>뉴비인데...<i>[4]</i><td class="n">ㅇㅇ <em>(118.235)</em><td>05.22<td>110<td>2
<tr><td>35137<td>나폴리<td class="t"><svg><use href="#s"/></svg>나폴리탄 동화 단편선 2<i>[3]</i><td class="n">Kassian<svg class="u"><use href="#uy"/></svg><td>05.22<td>517<td>15
<tr><td>35136<td>규칙괴<td class="t"><svg><use href="#s"/></svg>혼자 지하실로 들어가게 해서 많이 놀랐지?<i>[8]</i><td class="n">ㅇㅇ <em>(39.114)</em><td>05.22<td>1373<td>28
<tr><td>35135<td>나폴리<td class="t"><svg><use href="#c"/></svg>낚시<i>[5]</i><td class="n">사슴맛파스타<svg class="u"><use href="#ug"/></svg><td>05.22<td>102<td>7
<tr><td>35133<td>잡담<td class="t"><svg><use href="#c"/></svg>글쓰기에 AI 쓰는 사람 있음?<i>[3]</i><td class="n">ㅇㅇ <em>(222.111)</em><td>05.22<td>186<td>1
<tr><td>35131<td>잡담<td class="t"><svg><use href="#s"/></svg>"50대 이상은 무서워서 못 보는 괴담을 쓰고 있습니다."<i>[7]</i><td class="n">한생한사<svg class="u"><use href="#uy"/></svg><td>05.22<td>1453<td>21
<tr><td>35130<td>잡담<td class="t"><svg><use href="#c"/></svg>요즘 ㅈㄴ 바빠서 글을 못쓰겠네<td class="n">||||||||||<svg class="u"><use href="#ug"/></svg><td>05.22<td>63<td>0
<tr><td>35129<td>찾아줘<td class="t"><svg><use href="#c"/></svg>이런거 처음 해보는데<i>[6]</i><td class="n">rinrin77 <em>(118.223)</em><td>05.22<td>190<td>1
<tr><td>35128<td>잡담<td class="t"><svg><use href="#p"/></svg>약간 이상한 교회 현판<td class="n">ㅇㅇ <em>(14.55)</em><td>05.22<td>180<td>1
<tr><td>35127<td>찾아줘<td class="t"><svg><use href="#c"/></svg>계단이랑 음수 층 나오는 괴담이 있었나<i>[7]</i><td class="n">ㅇㅇ <em>(115.145)</em><td>05.22<td>310<td>1
<tr><td>35126<td>잡담<td class="t"><svg><use href="#p"/></svg>옛날에 야간 편의점알바할때 겪은 화면<i>[1]</i><td class="n">ㅇㅇ <em>(119.201)</em><td>05.22<td>245<td>4
<tr><td>35125<td>잡담<td class="t"><svg><use href="#c"/></svg>재난문자 괴담은 왜케 불쾌하면서 중독성 있지<i>[4]</i><td class="n">ㅇㅇ<svg class="u"><use href="#ug"/></svg><td>05.22<td>303<td>4
<tr><td>35124<td>연재<td class="t"><svg><use href="#c"/></svg>[인류를 위한 마지막 도시] 의류 공장 근무 수칙<i>[3]</i><td class="n">구로구로상<svg class="u"><use href="#uy"/></svg><td>05.22<td>240<td>7
<tr><td style="border-bottom:1px solid #29367c"><td style="border-bottom:1px solid #29367c">뉴스<td class="t b" style="border-bottom:1px solid #29367c;color:#0a8a2e"><svg><use href="#ns"/></svg>'여왕의 집' 박윤채 덫에 걸린 함은정, 인생 최대 위기 직...<td class="n" style="border-bottom:1px solid #29367c">디시트렌드<td style="border-bottom:1px solid #29367c">10:00<td style="border-bottom:1px solid #29367c"><td style="border-bottom:1px solid #29367c">
</table>

<!-- bottom buttons -->
<div class="btn nv" style="left:178px;top:4232px;width:82px;height:35px;line-height:30px">전체글</div>
<div class="btn" style="left:266px;top:4232px;width:82px;height:35px;line-height:30px;background:#fff;color:#29367c;border:1px solid #29367c;border-bottom:3px solid #29367c">개념글</div>
<div class="btn nv" style="left:936px;top:4232px;width:82px;height:35px;line-height:30px">글쓰기</div>

<!-- pagination -->
<div class="a f14 b" style="left:405px;top:4287px;color:#b71c1c;text-decoration:underline">1</div>
<div class="a f14 b" style="left:424px;top:4287px">2</div>
<div class="a f14 b" style="left:443px;top:4287px">3</div>
<div class="a f14 b" style="left:462px;top:4287px">4</div>
<div class="a f14 b" style="left:481px;top:4287px">5</div>
<div class="a f14 b" style="left:499px;top:4287px">6</div>
<div class="a f14 b" style="left:518px;top:4287px">7</div>
<div class="a f14 b" style="left:537px;top:4287px">8</div>
<div class="a f14 b" style="left:556px;top:4287px">9</div>
<div class="a f14 b" style="left:575px;top:4287px">10</div>
<div class="a f14 b" style="left:603px;top:4287px">11</div>
<div class="a f14 b" style="left:631px;top:4287px">12</div>
<div class="a f14 b" style="left:660px;top:4287px">13</div>
<div class="a f14 b" style="left:688px;top:4287px">14</div>
<div class="a f14 b" style="left:716px;top:4287px">15</div>
<div class="r" style="left:756px;top:4291px;border-top:6px solid transparent;border-bottom:6px solid transparent;border-left:9px solid #aaa"></div>
<div class="r" style="left:778px;top:4291px;border-top:6px solid transparent;border-bottom:6px solid transparent;border-left:9px solid #aaa"></div>
<div class="r" style="left:787px;top:4291px;width:2px;height:12px;background:#aaa"></div>
<div class="r" style="left:909px;top:4283px;width:108px;height:26px;background:#f3f3f3;border:1px solid #e0e0e0;border-bottom:2px solid #ddd;border-radius:13px"></div>
<div class="a f12 g5" style="left:919px;top:4286px">페이지 이동</div>
<svg class="r" style="left:993px;top:4289px" width="14" height="14"><circle cx="7" cy="7" r="6" fill="none" stroke="#333" stroke-width="1.200"/><path d="M3.500 7H10M7.500 4.500 10 7 7.500 9.500" stroke="#333" fill="none"/></svg>

<!-- search -->
<div class="r" style="left:372px;top:4332px;width:125px;height:38px;background:#3b4890"></div>
<div class="r" style="left:376px;top:4336px;width:83px;height:30px;background:#fff"></div>
<div class="a f13" style="left:384px;top:4341px">제목+내용</div>
<div class="r" style="left:469px;top:4347px;border-left:7.500px solid transparent;border-right:7.500px solid transparent;border-top:11px solid #fff"></div>
<div class="r" style="left:503px;top:4332px;width:320px;height:38px;background:#3b4890"></div>
<div class="r" style="left:507px;top:4336px;width:278px;height:30px;background:#fff"></div>
<svg class="r" style="left:794px;top:4340px" width="20" height="20" viewBox="0 0 27 23"><use href="#mg"/></svg>

<!-- sidebar login -->
<div class="r" style="left:1038px;top:2556px;width:300px;height:80px;border:1px solid #29367c;background:#fff"></div>
<div class="r" style="left:1039px;top:2600px;width:298px;height:35px;background:#f3f3f3"></div>
<div class="a f14 b bl" style="left:1057px;top:2568px">로그인해 주세요.</div>
<div class="a f12 b" style="left:1080px;top:2607px;color:#444">MY갤로그</div>
<div class="sp" style="left:1152px;top:2612px;height:10px"></div>
<div class="a f12 b" style="left:1172px;top:2607px;color:#444">즐겨찾기</div>
<div class="sp" style="left:1234px;top:2612px;height:10px"></div>
<svg class="r" style="left:1254px;top:2611px" width="14" height="12"><path d="M0 10q3-1 3-5t4-5 4 5 3 5z" fill="#444"/><rect x="5" y="10" width="4" height="2" fill="#444"/></svg>
<div class="a f12 b" style="left:1274px;top:2607px;color:#444">알림</div>

<!-- best -->
<div class="side" style="top:2918px;height:341px"></div>
<div class="a f14 b" style="left:1054px;top:2930px">실시간 베스트</div>
<div class="a f12 g5" style="left:1266px;top:2930px"><b>1</b>/8</div>
<div class="arr" style="top:2932px"></div>
<div class="r" style="left:1296px;top:2936px;border-top:4px solid transparent;border-bottom:4px solid transparent;border-right:6px solid #8b93c5"></div>
<div class="r" style="left:1313px;top:2936px;border-top:4px solid transparent;border-bottom:4px solid transparent;border-left:6px solid #fff"></div>
<div class="dash" style="top:2962px"></div>
<svg class="r" style="left:1052px;top:2975px" width="131" height="87"><rect width="131" height="87" fill="#221a22"/><rect x="0" y="0" width="108" height="14" fill="#1a1820"/><rect x="20" y="2" width="60" height="7" fill="#c8642c"/><rect x="30" y="9" width="48" height="9" fill="#44403c"/><rect x="8" y="18" width="92" height="58" fill="#2d5e52"/><rect x="108" y="0" width="5" height="70" fill="#a02ca0"/><rect x="60" y="60" width="20" height="27" fill="#2a2a30"/><circle cx="68" cy="55" r="5" fill="#a07f64"/><rect x="90" y="62" width="18" height="25" fill="#1a1a20"/><circle cx="100" cy="56" r="5" fill="#a07f64"/></svg>
<div class="r" style="left:1192px;top:2975px;width:132px;height:87px;border:1px solid #ccc;background:#fff"></div>
<svg class="r" style="left:1197px;top:2977px" width="122" height="68"><rect width="122" height="68" fill="#e8e4da"/><rect x="0" y="0" width="50" height="68" fill="#f5f5f2"/><rect x="35" y="5" width="45" height="22" fill="#e0c66a"/><rect x="70" y="20" width="40" height="22" fill="#6a503c"/><circle cx="40" cy="30" r="7" fill="#c89a70"/><rect x="25" y="38" width="30" height="22" fill="#d08a88"/><rect x="80" y="40" width="40" height="16" fill="#77bb88"/><ellipse cx="60" cy="50" rx="24" ry="10" fill="#f2f2f2"/></svg>
<div class="r" style="left:1052px;top:3069px;width:130px;line-height:18px;color:#555;word-break:break-all">자기색정사에 대해 알아보자!</div>
<div class="r" style="left:1192px;top:3069px;width:132px;line-height:18px;color:#555;word-break:break-all">이경규 "연예인들 방송에서 나대지 마라"ㄷ</div>
<div class="r" style="left:1052px;top:3118px;width:272px;height:1px;background:#eee"></div>
<div class="r g5" style="left:1052px;top:3130px;width:280px;line-height:22px;white-space:nowrap">"더는 못 버터" 백종원 빽다방 논란...곰팡이 디저트...<br>수능 다 풀어본 교사.jpg<br>손흥민 '전여친' 풀려날 가능성 높음 ㅋㅋㅋㅋㅋㅋㅋㅋ<br>(사진多) Play x4 목요일 후기.<br>싱글벙글 카드 비닐이 너무 강함.jpg</div>

<!-- news box -->
<div class="side" style="top:3274px;height:300px"></div>
<div class="a f14 b" style="left:1053px;top:3288px;text-decoration:underline">뉴스</div>
<div class="sp" style="left:1088px;top:3292px;height:12px"></div>
<div class="a f14 b" style="left:1099px;top:3288px;color:#444">디시미디어</div>
<div class="sp" style="left:1171px;top:3292px;height:12px"></div>
<div class="a f14 b" style="left:1183px;top:3288px;color:#444">디시이슈</div>
<div class="a f12 g5" style="left:1266px;top:3287px"><b>1</b>/2</div>
<div class="arr" style="top:3289px"></div>
<div class="r" style="left:1296px;top:3293px;border-top:4px solid transparent;border-bottom:4px solid transparent;border-right:6px solid #8b93c5"></div>
<div class="r" style="left:1313px;top:3293px;border-top:4px solid transparent;border-bottom:4px solid transparent;border-left:6px solid #fff"></div>
<div class="dash" style="top:3319px"></div>
<svg class="r" style="left:1052px;top:3332px" width="131" height="87"><rect width="66" height="87" fill="#5a7a6a"/><rect width="66" height="30" fill="#3c4e74"/><rect x="66" width="65" height="87" fill="#8d8268"/><rect x="66" width="65" height="16" fill="#e0e0dc"/><path d="M18 87V46l16-10 18 8v43z" fill="#c8202a"/><circle cx="30" cy="26" r="9" fill="#e0b090"/><path d="M5 78 14 50l8 28z" fill="#9aa4a8"/><ellipse cx="90" cy="69" rx="15" ry="10" fill="#d8d8e0"/><circle cx="90" cy="69" r="8" fill="#c8483a"/><rect x="80" y="22" width="40" height="30" fill="#706850"/></svg>
<svg class="r" style="left:1192px;top:3332px" width="132" height="87"><rect width="132" height="87" fill="#b8b4ac"/><rect x="54" y="0" width="24" height="26" fill="#d8d4c8"/><rect x="118" y="0" width="14" height="87" fill="#e8e8e6"/><rect x="0" y="44" width="34" height="43" fill="#50586a"/><rect x="4" y="62" width="32" height="25" fill="#d8a078"/><path d="M44 87V62l20-12h16l20 12v25z" fill="#454240"/><circle cx="72" cy="32" r="11" fill="#2a2420"/><circle cx="72" cy="37" r="8" fill="#c8a088"/></svg>
<div class="r" style="left:1052px;top:3427px;width:130px;line-height:18px;color:#555;word-break:break-all">세상 가장 부러운 전역복...‘김연아♥’ 고우림...</div>
<div class="r" style="left:1192px;top:3427px;width:132px;line-height:18px;color:#555;word-break:break-all">“얼굴에 줄기세포 주사 맞았다” 고백한 아이돌......</div>
<div class="r" style="left:1052px;top:3477px;width:272px;height:1px;background:#eee"></div>
<div class="r g5" style="left:1052px;top:3490px;width:280px;line-height:22px;white-space:nowrap">가수 Raven Quinn•플릿•TOVE, 5월 4주 차 위...<br>‘52세 맞아?’ 미나, 스스로 ‘노화가 멈춘 50대 한국...<br>서은우, 잠적한 남자친구 다시 공개 저격... “죽어주...</div>

<!-- gaenyeom -->
<div class="side" style="top:3590px;height:204px"></div>
<div class="a f14 b" style="left:1053px;top:3603px">개념글<span class="f13 g6" style="font-weight:normal">[등산]</span></div>
<div class="a f12 g5" style="left:1258px;top:3602px"><b>1</b>/23</div>
<div class="arr" style="top:3604px"></div>
<div class="r" style="left:1296px;top:3608px;border-top:4px solid transparent;border-bottom:4px solid transparent;border-right:6px solid #8b93c5"></div>
<div class="r" style="left:1313px;top:3608px;border-top:4px solid transparent;border-bottom:4px solid transparent;border-left:6px solid #fff"></div>
<div class="dash" style="top:3634px"></div>
<div class="r g5" style="left:1056px;top:3644px;line-height:22px;white-space:nowrap">· 질문 안받는다. 실시간.<br>· 공룡능선 진짜 과대평가 되어있네 ㅋㅋ<br>· 평속 빨라지는 모자<br>· 좀살롱 형님 신작 떴구나 ㅋㅋ<br>· 해남에서 오신 누님이 주심<br>· 날씨 ㅁㅌㅊ?</div>

<!-- footer category -->
<div class="r" style="left:178px;top:4450px;width:1160px;height:294px;border:1px solid #ddd;border-top:2px solid #29367c;border-bottom:1px solid #29367c"></div>
<div class="sp" style="left:371px;top:4472px;height:203px;background:#eee"></div>
<div class="sp" style="left:562px;top:4472px;height:203px;background:#eee"></div>
<div class="sp" style="left:753px;top:4472px;height:203px;background:#eee"></div>
<div class="sp" style="left:944px;top:4472px;height:203px;background:#eee"></div>
<div class="sp" style="left:1135px;top:4472px;height:203px;background:#eee"></div>
<div class="a f12 b" style="left:199px;top:4472px;text-decoration:underline">게임</div>
<div class="a f12 b" style="left:392px;top:4472px;text-decoration:underline">연예/방송</div>
<div class="a f12 b" style="left:583px;top:4472px;text-decoration:underline">스포츠</div>
<div class="a f12 b" style="left:774px;top:4472px;text-decoration:underline">교육/금융/IT</div>
<div class="a f12 b" style="left:965px;top:4472px;text-decoration:underline">여행/음식/생물</div>
<div class="a f12 b" style="left:1156px;top:4472px;text-decoration:underline">취미/생활</div>
<div class="ft" style="left:199px">던전앤파이터<br>리그 오브 레전드<br>메이플스토리<br>승리의 여신 니케<br>아이돌마스터<br>로스트아크<br>FC 온라인<br>사운드 볼텍스<br>마비노기<br>포켓몬스터</div>
<div class="ft" style="left:392px">남자 연예인<br>여자 연예인<br>방탄소년단<br>아이유<br>샤이니<br>귀궁<br>기타 국내 드라마<br>걸스플래닛999<br>미스터 트롯<br>기타 미국드라마</div>
<div class="ft" style="left:583px">롯데 자이언츠<br>한화 이글스<br>해외야구<br>LG 트윈스<br>국내야구<br>해외축구<br>삼성 라이온즈<br>KIA 타이거즈<br>SSG 랜더스<br>키움 히어로즈</div>
<div class="ft" style="left:774px">대출<br>비트코인<br>주식<br>컴퓨터 본체<br>프로그래밍<br>자격증<br>학점은행제<br>토익<br>정치, 사회<br>영어</div>
<div class="ft" style="left:965px">여행-일본<br>여행-동남아<br>편의점<br>치킨<br>기타음식<br>주류<br>식물<br>파충류, 양서류<br>멍멍이<br>야옹이</div>
<div class="ft" style="left:1156px">인터넷방송<br>판타지<br>토이<br>역학<br>LGBT<br>미스터리<br>카툰-연재<br>만화<br>향수, 화장품<br>안경</div>
<div class="r" style="left:179px;top:4704px;width:1158px;height:1px;background:#ccc"></div>
<svg class="r" style="left:1212px;top:4717px" width="8" height="12"><path d="M6 .500A5.500 5.500 0 1 0 6 11.500 7 7 0 0 1 6 .500z" fill="#333"/></svg>
<div class="a f11 g5" style="left:1223px;top:4713px">야간모드</div>
<svg class="r" style="left:1273px;top:4718px" width="9" height="10"><path d="M4.500 0 8 4.500H5.500V7H3.500V4.500H1z" fill="#333"/><rect x="1" y="8" width="7" height="2" fill="#333"/></svg>
<div class="a f11 g5" style="left:1286px;top:4713px">맨위로</div>

<!-- footer -->
<div class="a f12 g5" style="left:452px;top:4771px">회사소개</div>
<div class="sp" style="left:511px;top:4776px;height:11px"></div>
<div class="a f12 g5" style="left:522px;top:4771px">제휴안내</div>
<div class="sp" style="left:580px;top:4776px;height:11px"></div>
<div class="a f12 g5" style="left:590px;top:4771px">광고안내</div>
<div class="sp" style="left:649px;top:4776px;height:11px"></div>
<div class="a f12 g5" style="left:660px;top:4771px">이용약관</div>
<div class="sp" style="left:718px;top:4776px;height:11px"></div>
<div class="a f12 b" style="left:729px;top:4771px">개인정보처리방침</div>
<div class="sp" style="left:831px;top:4776px;height:11px"></div>
<div class="a f12 g5" style="left:843px;top:4771px">청소년보호정책</div>
<div class="sp" style="left:933px;top:4776px;height:11px"></div>
<div class="a f12 g5" style="left:944px;top:4771px">마이너 갤러리 운영원칙</div>
<div class="a f11 g5" style="left:594px;top:4799px">Copyright © 1999 - 2025 dcinside. All rights reserved.</div>
</body></html>
